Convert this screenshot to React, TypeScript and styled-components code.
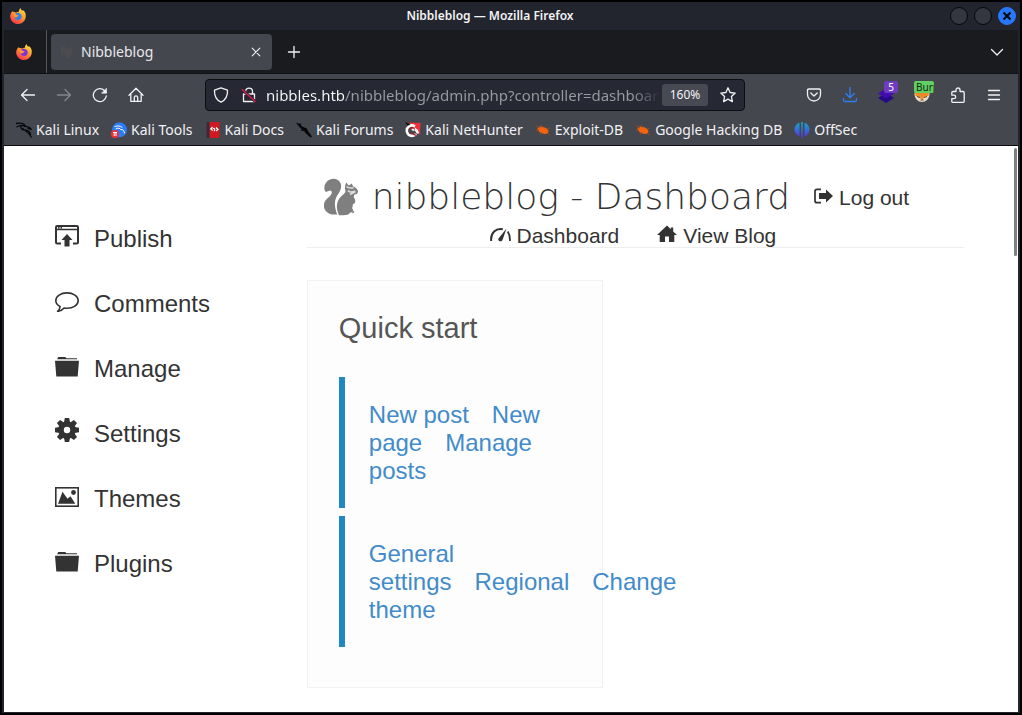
import React, { useId } from "react";
import styled, { createGlobalStyle } from "styled-components";

const uiFont = `"Noto Sans", "Open Sans", sans-serif`;
const pageFont = `"Liberation Sans", Arial, sans-serif`;

const GlobalStyle = createGlobalStyle`
  *, *::before, *::after { box-sizing: border-box; }
  body { margin: 0; background: #000; }
  button, input { font: inherit; }
  svg { display: block; flex: none; }
`;

/* ---------- Window frame ---------- */

const Window = styled.div`
  display: flex;
  flex-direction: column;
  min-height: 100vh;
  border: 2px solid #000;
  background: #23252e;
  font-family: ${uiFont};
  color: #f2f2f4;
`;

const TitleBar = styled.header`
  display: flex;
  align-items: center;
  height: 28px;
  padding: 0 4px 0 8px;
`;

const WindowTitle = styled.div`
  flex: 1;
  padding-left: 16px;
  text-align: center;
  font-size: 12px;
  font-weight: 600;
  line-height: 24px;
`;

const WindowButtons = styled.div`
  display: flex;
  gap: 6px;
  padding-left: 12px;
`;

const WindowButton = styled.button<{ $close?: boolean }>`
  display: flex;
  align-items: center;
  justify-content: center;
  width: 18px;
  height: 18px;
  padding: 0;
  border: 1px solid ${(p) => (p.$close ? "#2777ff" : "#07080b")};
  border-radius: 50%;
  background: ${(p) => (p.$close ? "#2777ff" : "#343741")};
  color: #07080b;
`;

const Browser = styled.div`
  display: flex;
  flex: 1;
  flex-direction: column;
  margin: 0 2px 1px;
`;

/* ---------- Tabs ---------- */

const TabStrip = styled.div`
  display: flex;
  align-items: center;
  height: 44px;
  border-bottom: 1px solid #101114;
  background: #1a1b1f;
`;

const ViewButton = styled.button`
  display: flex;
  align-items: center;
  justify-content: center;
  align-self: stretch;
  width: 43px;
  padding: 0 2px 0 0;
  border: 0;
  border-right: 1px solid #55565c;
  background: none;
`;

const Tab = styled.div`
  display: flex;
  align-items: center;
  width: 221px;
  height: 36px;
  margin-left: 4px;
  padding: 0 6px 0 8px;
  border-radius: 4px;
  background: #45474f;
  font-size: 14px;
`;

const TabLabel = styled.span`
  flex: 1;
  padding-left: 6px;
  color: #e8e8ea;
`;

const IconButton = styled.button<{ $width: number; $color?: string }>`
  position: relative;
  display: flex;
  align-items: center;
  justify-content: center;
  width: ${(p) => p.$width}px;
  height: 32px;
  padding: 0;
  border: 0;
  background: none;
  color: ${(p) => p.$color ?? "#f2f2f4"};
`;

const Spacer = styled.div`
  flex: 1;
`;

/* ---------- Navigation bar ---------- */

const NavBar = styled.nav`
  display: flex;
  align-items: center;
  height: 41px;
  padding: 0 6px;
  background: #45474f;
`;

const AddressBar = styled.div`
  display: flex;
  flex: 1;
  align-items: center;
  min-width: 0;
  height: 32px;
  margin: 0 51px;
  padding: 0 1px;
  border: 1px solid #0d0e12;
  border-radius: 4px;
  background: #262833;
`;

const AddressInput = styled.input`
  flex: 1;
  min-width: 0;
  height: 28px;
  margin: 0 2px 0 3px;
  padding: 0;
  border: 0;
  outline: 0;
  background: linear-gradient(
    to right,
    #fafafc 78px,
    #9a9ba2 78px,
    #9a9ba2 calc(100% - 28px),
    #262833
  );
  background-clip: text;
  -webkit-background-clip: text;
  -webkit-text-fill-color: transparent;
  color: #9a9ba2;
  font-size: 15px;
`;

const ZoomButton = styled.button`
  width: 46px;
  height: 22px;
  margin-right: 5px;
  padding: 0;
  border: 0;
  border-radius: 3px;
  background: #474953;
  color: #f2f2f4;
  font-size: 12px;
  line-height: 22px;
`;

const Badge = styled.span<{ $green?: boolean }>`
  position: absolute;
  top: 2px;
  right: 6px;
  width: ${(p) => (p.$green ? 20 : 14)}px;
  height: 12px;
  overflow: hidden;
  padding-left: ${(p) => (p.$green ? 2 : 0)}px;
  border-radius: 2px;
  background: ${(p) => (p.$green ? "#62cf62" : "#6f3cc0")};
  color: ${(p) => (p.$green ? "#102a10" : "#fff")};
  font-size: 10px;
  line-height: 12px;
  text-align: ${(p) => (p.$green ? "left" : "center")};
`;

/* ---------- Bookmarks ---------- */

const BookmarkBar = styled.nav`
  display: flex;
  align-items: center;
  gap: 12px;
  height: 31px;
  padding-left: 12px;
  border-bottom: 1px solid #0b0b0e;
  background: #45474f;
`;

const Bookmark = styled.a`
  display: flex;
  align-items: center;
  gap: 4px;
  color: #f2f2f4;
  font-size: 14px;
  line-height: 20px;
  text-decoration: none;
  white-space: nowrap;
`;

/* ---------- Page ---------- */

const Page = styled.div`
  position: relative;
  display: flex;
  flex: 1;
  padding: 0 54px 24px 51px;
  background: #fff;
  color: #333;
  font-family: ${pageFont};
`;

const ScrollThumb = styled.div`
  position: absolute;
  top: 2px;
  right: 1px;
  width: 3px;
  height: 108px;
  border-radius: 2px;
  background: #7f8082;
`;

const SideNav = styled.nav`
  flex: 1;
  padding-top: 60px;
`;

const SideLink = styled.a`
  display: flex;
  align-items: baseline;
  gap: 15px;
  color: #333;
  font-size: 24px;
  line-height: 65px;
  text-decoration: none;
`;

const Main = styled.main`
  width: 72.3%;
`;

const PageHeader = styled.header`
  padding-top: 25px;
  border-bottom: 1px solid #eee;
`;

const TitleRow = styled.div`
  display: flex;
  align-items: center;
  justify-content: center;
  padding-right: 40px;
`;

const PageTitle = styled.h1`
  margin: 0 24px 0 12px;
  font-family: "DejaVu Sans Light", "DejaVu Sans", sans-serif;
  font-size: 36px;
  font-weight: 200;
  line-height: 52px;
  white-space: nowrap;
`;

const TopNav = styled.nav`
  display: flex;
  justify-content: center;
  gap: 38px;
  padding: 1px 5px 0 0;
`;

const TopLink = styled.a`
  display: flex;
  align-items: baseline;
  gap: 6px;
  color: #333;
  font-size: 21px;
  line-height: 23px;
  text-decoration: none;
  white-space: nowrap;
`;

const Card = styled.section`
  width: 45%;
  margin-top: 32px;
  padding: 31px 31px 40px;
  border: 1px solid #f1f1f1;
  background: #fdfdfd;
`;

const CardTitle = styled.h2`
  margin: 0 0 33px;
  color: #555;
  font-size: 29px;
  font-weight: 400;
  line-height: 32px;
`;

const LinkGroup = styled.div`
  padding: 24px 0 23px 24px;
  border-left: 6px solid #2187c2;
  font-size: 24px;
  line-height: 28px;

  & + & {
    margin-top: 8px;
  }
`;

const QuickLink = styled.a`
  margin-right: 23px;
  color: #428bca;
  text-decoration: none;
`;

/* ---------- Icons ---------- */

type IconProps = { size?: number; children: React.ReactNode };

const Line = ({ size = 16, children }: IconProps) => (
  <svg width={size} height={size} viewBox="0 0 16 16" fill="none" stroke="currentColor" strokeWidth="1.3" strokeLinecap="round" strokeLinejoin="round" aria-hidden="true">
    {children}
  </svg>
);

const Art = ({ size = 16, children }: IconProps) => (
  <svg width={size} height={size} viewBox="0 0 16 16" aria-hidden="true">
    {children}
  </svg>
);

const Glyph = ({ size = 24, children }: IconProps) => (
  <svg width={size} height={size} viewBox="0 0 24 24" fill="currentColor" aria-hidden="true">
    {children}
  </svg>
);

const FirefoxLogo = ({ core, size = 16 }: { core: string; size?: number }) => {
  const id = useId();
  return (
    <Art size={size}>
      <defs>
        <linearGradient id={id} x1="0.8" y1="0" x2="0.25" y2="1">
          <stop offset="0" stopColor="#ffe44a" />
          <stop offset="0.45" stopColor="#ff9a2a" />
          <stop offset="1" stopColor="#ff3053" />
        </linearGradient>
      </defs>
      <path d="M2.2 3.2C2.7 3.7 3.4 4 4.2 4L6 4.4 9 3.6C8.9 2 9.7.8 10.7 0c0 1.3.7 2 1.6 2.8.3-.2.4-.5.5-.8C15 3.500 16 5.800 15.800 8.500 15.500 12.800 12.200 16 8 16S.4 12.700.2 8.700C.1 6.500 1.100 4.600 2.200 3.200z" fill={`url(#${id})`} />
      <path d="M5.200 5.500C7 4 10.800 4.700 11.600 7.500c.7 2.500-1.200 4.500-3.500 4.500S4.500 10.500 4.500 8.800c1.200.7 2.500.3 3-.8-1 0-1.900-.7-2.300-2.500z" fill={core} />
      <path d="M3.800 6.300C5 5.700 6.300 6.300 7 7c.9.1 1.500.3 1.600.6-.4 1-1.500 1-1.700 1.400-.9.700-2 .3-2.500 0z" fill="#ff9838" />
    </Art>
  );
};

const DragonArt = () => (
  <Art>
    <path d="M0 1.500c4-.8 7-.4 8.500 1.300M1 4.800C4 3 7 3 9 4.500M5 4c-.5 3 1.500 4 4.500 4.200 3.200.2 4.500 1.800 5 4.300M9 3.800l4.500 1.700 1.500 1.700-3-.8M7 6.500c2 3 5 2.500 8.200 8.500" fill="none" stroke="#07080a" strokeWidth="1.300" strokeLinecap="round" />
  </Art>
);

const ToolsArt = () => (
  <Art>
    <circle cx="8.500" cy="7.800" r="7.500" fill="#2b7cf6" />
    <path d="M4 4.500c3-1 5-.8 7 .8M5 6.800C7.500 5.500 9 6.300 9.500 7.500c2.500-.3 3.500 1 4 3.500" fill="none" stroke="#fff" strokeWidth="1" strokeLinecap="round" />
    <rect x="0" y="8" width="8" height="8" rx="3.500" fill="#e8323c" />
    <path d="M2 10.500h4M3.200 10.500v3.500M5 10.500v3.500" stroke="#fff" strokeWidth="1" />
  </Art>
);

const DocsArt = () => (
  <Art>
    <rect x="1.500" y="0" width="13" height="16" rx="1" fill="#d21820" />
    <rect x="1.500" y="0" width="3" height="16" fill="#29303f" />
    <path d="M7.500 5L5.800 7l2 1.500M11 5.500L13 7.500 11 9M7.800 6.500c2-.8 2.600 2.700 1 2.200" fill="none" stroke="#fff" strokeWidth="1.200" />
  </Art>
);

const ForumsArt = () => (
  <Art>
    <path d="M0 .5l3 1.200L4.500 1l.5 2.500 3 2 2.500.5 1.500 3 4 5.500-1.500 1-4.500-4-2-2.500-3.500-.5 1.300-1.300L3 4.500 1.800 3z" fill="#07080a" />
  </Art>
);

const NetHunterArt = () => (
  <Art>
    <path d="M4 .5L15.500 1 15 13z" fill="#f2303c" />
    <path d="M10 4.500C5.500 1.500.8 5.500 2 10s6.500 5 9 2M7.500 8.500c1-2.500 4-2 5.500 3" fill="none" stroke="#fff" strokeWidth="2.600" />
    <path d="M0 .5c3 0 4.500 1 5 2.500l-2.500.5z" fill="#111" />
    <path d="M4.500 7c1.500-1.500 4-1.500 5.500.5M5 10c1.500 2 4 2 6 3.500" fill="none" stroke="#b51c27" strokeWidth="1.200" />
  </Art>
);

const BugArt = () => (
  <Art>
    <ellipse cx="8" cy="8.200" rx="5.800" ry="3.300" transform="rotate(22 8 8.200)" fill="#f2640f" />
    <path d="M1 3.500l4 2.700M6 2.500l1 3M1 8.500l3-.5M5 13l1.500-2.500M12.500 6.500L15 6M12 11l3 2.500" stroke="#8c4b2b" strokeWidth="1" />
  </Art>
);

const OffSecArt = () => {
  const id = useId();
  return (
    <Art>
      <defs>
        <linearGradient id={id} x1="0" y1="0" x2="0" y2="1">
          <stop offset="0" stopColor="#13aeca" />
          <stop offset="1" stopColor="#5a2be0" />
        </linearGradient>
      </defs>
      <path d="M5.500.8v13.500C-1.200 12-1.200 3 5.500.8zM7.200 0h1.600v16H7.200zM10.500.8c6.700 2.200 6.700 11.200 0 13.500z" fill={`url(#${id})`} />
    </Art>
  );
};

const FolderGlyph = () => (
  <Glyph>
    <path d="M2.500 5.200L3.300 4h7l1 1.200H22v1.100H2.300zM0 7.800h24l-1.300 15.700H1.300z" />
  </Glyph>
);

const PublishGlyph = () => (
  <Glyph>
    <path d="M6 20.500H2.200Q1 20.500 1 19.300V4.200Q1 3 2.200 3h19.600Q23 3 23 4.200v15.100q0 1.200-1.200 1.200H18" fill="none" stroke="currentColor" strokeWidth="2" />
    <path d="M1 6.500h22M3 4.800h1.500M5.500 4.800H7" stroke="currentColor" strokeWidth="1.400" />
    <path d="M12 11l5.500 6H14.500v6.500h-5V17H6.500z" />
  </Glyph>
);

const CommentGlyph = () => (
  <Glyph>
    <path d="M12 4.900c6.200 0 11.200 3.200 11.200 7.700s-5 7.700-11.200 7.700c-1 0-2-.1-2.900-.3-1.700 2-4 3.200-6.500 3.300 1.600-1.200 2.500-2.800 2.400-4.800C2.500 17.200.8 15 .8 12.600.8 8.100 5.800 4.900 12 4.900z" fill="none" stroke="currentColor" strokeWidth="1.600" strokeLinejoin="round" />
  </Glyph>
);

const GearGlyph = () => (
  <Glyph>
    <circle cx="12" cy="12" r="6" fill="none" stroke="currentColor" strokeWidth="5.600" />
    {[0, 45, 90, 135, 180, 225, 270, 315].map((angle) => (
      <path key={angle} d="M9 4.500L9.800 0h4.400L15 4.500z" transform={`rotate(${angle} 12 12)`} />
    ))}
  </Glyph>
);

const PictureGlyph = () => (
  <Glyph>
    <rect x=".8" y="4.800" width="22.400" height="18.400" fill="none" stroke="currentColor" strokeWidth="1.600" />
    <path d="M3 20.800L7.500 8.800l5 7 3-2.500 4.800 7.500z" />
    <circle cx="18.500" cy="9.500" r="2.400" />
  </Glyph>
);

const SquirrelLogo = () => (
  <svg width="38" height="38" viewBox="0 0 38 38" role="img" aria-label="Nibbleblog">
    <path d="M10 36.500C4.500 35 1.500 31.500 2 27c.3-4 2.300-5.500 5.200-8.200C9.500 16.700 10.500 14.500 9.300 13c-1.200-1.300-3 0-5.300 1C1.300 12 2 6.500 5 3.500 8.500.2 14.500-.3 17.500 3.500c3.500 4.500.8 9.500-2 13.500-2.700 4-3.500 9.500-1.500 16 .5 2 1.500 3.500 1.500 3.500z" fill="#7f7f7f" />
    <path d="M17 37.200C13.500 30 14.500 23 19 18.500c2-2 4.200-2.800 4.500-5.500-1-3-.5-6 .7-8.500l2.600 3 3-2 1.200 2.800c2.500 1 5 3.400 5 5.200 0 1.800-1.500 3-3.800 3.200l-.5 2.300c2 3 2.500 6.500-.7 7l-.8 4.500c2 2.200.5 4-2.300 4.200-.8 1.800-3.500 2.500-6.500 2.500z" fill="#7f7f7f" />
    <path d="M24.500 8.500c1.500 1.500 4.500 1.700 7 1.300M26 12.500c2 2.500 4.500 1.700 7 .5M28 16.500l5.500-3" fill="none" stroke="#dedede" strokeWidth="1.600" />
    <circle cx="31" cy="34" r="1.300" fill="#999" />
  </svg>
);

/* ---------- Content ---------- */

const bookmarks = [
  { label: "Kali Linux", art: <DragonArt /> },
  { label: "Kali Tools", art: <ToolsArt /> },
  { label: "Kali Docs", art: <DocsArt /> },
  { label: "Kali Forums", art: <ForumsArt /> },
  { label: "Kali NetHunter", art: <NetHunterArt /> },
  { label: "Exploit-DB", art: <BugArt /> },
  { label: "Google Hacking DB", art: <BugArt /> },
  { label: "OffSec", art: <OffSecArt /> },
];

const sections = [
  { label: "Publish", icon: <PublishGlyph /> },
  { label: "Comments", icon: <CommentGlyph /> },
  { label: "Manage", icon: <FolderGlyph /> },
  { label: "Settings", icon: <GearGlyph /> },
  { label: "Themes", icon: <PictureGlyph /> },
  { label: "Plugins", icon: <FolderGlyph /> },
];

const quickLinks = [
  ["New post", "New page", "Manage posts"],
  ["General settings", "Regional", "Change theme"],
];

export default function App() {
  return (
    <Window>
      <GlobalStyle />
      <TitleBar>
        <FirefoxLogo core="#3a7de0" />
        <WindowTitle>Nibbleblog — Mozilla Firefox</WindowTitle>
        <WindowButtons>
          <WindowButton aria-label="Minimize" />
          <WindowButton aria-label="Maximize" />
          <WindowButton aria-label="Close" $close>
            <svg width="10" height="10" viewBox="0 0 10 10" stroke="currentColor" strokeWidth="2.200" aria-hidden="true">
              <path d="M1.500 1.500l7 7M8.500 1.500l-7 7" />
            </svg>
          </WindowButton>
        </WindowButtons>
      </TitleBar>

      <Browser>
        <TabStrip>
          <ViewButton aria-label="Firefox View">
            <FirefoxLogo core="#7a35d8" />
          </ViewButton>
          <Tab>
            <Art>
              <path d="M2 3l4-1 2 3 4-2 2 4-3 7H7L5 9 2 13z" fill="#4c4c50" />
            </Art>
            <TabLabel>Nibbleblog</TabLabel>
            <IconButton $width={20} aria-label="Close tab">
              <Line>
                <path d="M4.200 4.200l7.600 7.600M11.800 4.200l-7.600 7.600" strokeWidth="1.100" />
              </Line>
            </IconButton>
          </Tab>
          <IconButton $width={43} aria-label="New tab">
            <Line>
              <path d="M8 2.500v11M2.500 8h11" />
            </Line>
          </IconButton>
          <Spacer />
          <IconButton $width={42} aria-label="List all tabs">
            <Line>
              <path d="M2.500 5.500L8 11l5.500-5.500" />
            </Line>
          </IconButton>
        </TabStrip>

        <NavBar>
          <IconButton $width={36} aria-label="Back">
            <Line>
              <path d="M14.500 8h-13M7 2.500L1.500 8 7 13.500" />
            </Line>
          </IconButton>
          <IconButton $width={36} $color="#85868c" aria-label="Forward">
            <Line>
              <path d="M1.500 8h13M9 2.500L14.500 8 9 13.500" />
            </Line>
          </IconButton>
          <IconButton $width={36} aria-label="Reload">
            <Line>
              <path d="M14.300 9A6.500 6.500 0 1 1 12.600 3.700L14 5.200" />
              <path d="M14.500 1.500v4.700H9.800z" fill="currentColor" strokeWidth=".6" />
            </Line>
          </IconButton>
          <IconButton $width={36} aria-label="Home">
            <Line>
              <path d="M1 8.200L8 1.200l7 7M2.800 7v7.300h10.400V7M6.300 14.300V10.500c0-2.200 3.400-2.200 3.400 0v3.800" />
            </Line>
          </IconButton>

          <AddressBar>
            <IconButton $width={28} aria-label="Tracking protection">
              <Line>
                <path d="M8 .9l6.500 2.300c.3 5.200-1.700 9.600-6.500 12C3.200 12.800 1.200 8.400 1.500 3.200z" />
              </Line>
            </IconButton>
            <IconButton $width={28} aria-label="Connection is not secure">
              <Line>
                <path d="M4.500 7V4.500C4.500 0 11.500 0 11.500 4.500V7M2.500 7h11v7.500h-11z" />
                <path d="M1.200 2.500l13 12" stroke="#262833" strokeWidth="3" />
                <path d="M1.200 2.500l13 12" stroke="#e3174c" />
              </Line>
            </IconButton>
            <AddressInput
              aria-label="Address"
              readOnly
              value="nibbles.htb/nibbleblog/admin.php?controller=dashboard"
            />
            <ZoomButton>160%</ZoomButton>
            <IconButton $width={30} aria-label="Bookmark this page">
              <Line>
                <path d="M8 .8l2.100 4.700 5.100.6-3.800 3.500 1 5L8 12.100l-4.400 2.500 1-5L.8 6.100l5.100-.6z" />
              </Line>
            </IconButton>
          </AddressBar>

          <IconButton $width={36} aria-label="Save to Pocket">
            <Line>
              <path d="M2.700 2h10.600q1.200 0 1.200 1.200V7.500c0 3.600-2.900 6.500-6.500 6.500S1.500 11.100 1.500 7.500V3.200Q1.500 2 2.700 2zM4.800 6L8 9l3.200-3" />
            </Line>
          </IconButton>
          <IconButton $width={36} $color="#2f7df6" aria-label="Downloads">
            <Line>
              <path d="M8 .5v10M3.800 6.500L8 10.700l4.200-4.200M1.500 11.500v1.500q0 1.500 1.500 1.500h10q1.500 0 1.500-1.500v-1.500" />
            </Line>
          </IconButton>
          <IconButton $width={36} aria-label="Proxy switcher">
            <Art>
              <path d="M8 6l8 5-8 5-8-5z" fill="#240a86" />
              <path d="M8 1.500l8 5-8 5-8-5z" fill="#430cb0" />
            </Art>
            <Badge>5</Badge>
          </IconButton>
          <IconButton $width={36} aria-label="FoxyProxy">
            <Art>
              <circle cx="8" cy="7.500" r="7.500" fill="#e8dcc8" />
              <path d="M1 3l3.500 2h7L15 3l-.5 6-3.500.5L8 13 5 9.500 1.500 9z" fill="#ee8a23" />
              <path d="M3 9.500l3 1M13 9.500l-3 1M6.500 13h3" stroke="#5a4030" strokeWidth="1" />
            </Art>
            <Badge $green>Burp</Badge>
          </IconButton>
          <IconButton $width={36} aria-label="Extensions">
            <Line>
              <path d="M1.800 6V5.700Q1.800 4.500 3 4.500h3V3c0-2.700 4-2.700 4 0v1.500h3q1.200 0 1.200 1.200v8.800q0 .8-.8.8H2.600q-.8 0-.8-.8v-2.800H4c2.200 0 2.200-3.600 0-3.600H1.800z" />
            </Line>
          </IconButton>
          <IconButton $width={36} aria-label="Open menu">
            <Line>
              <path d="M2.500 3.500h11M2.500 8h11M2.500 12.500h11" />
            </Line>
          </IconButton>
        </NavBar>

        <BookmarkBar>
          {bookmarks.map((b) => (
            <Bookmark key={b.label} href="#">
              {b.art}
              {b.label}
            </Bookmark>
          ))}
        </BookmarkBar>

        <Page>
          <SideNav>
            {sections.map((s) => (
              <SideLink key={s.label} href="#">
                {s.icon}
                {s.label}
              </SideLink>
            ))}
          </SideNav>

          <Main>
            <PageHeader>
              <TitleRow>
                <SquirrelLogo />
                <PageTitle>nibbleblog - Dashboard</PageTitle>
                <TopLink href="#">
                  <svg width="19" height="17" viewBox="0 0 19 17" fill="currentColor" aria-hidden="true">
                    <path d="M7 1.300H3Q1 1.300 1 3.300v9.400q0 2 2 2h4" fill="none" stroke="currentColor" strokeWidth="1.700" />
                    <path d="M5 5h7V1.500l7 6.500-7 6.500V11H5z" />
                  </svg>
                  Log out
                </TopLink>
              </TitleRow>
              <TopNav>
                <TopLink href="#">
                  <svg width="21" height="16" viewBox="0 0 21 16" fill="currentColor" aria-hidden="true">
                    <path d="M1.200 14C.3 6 6 .8 12.800 2.200" fill="none" stroke="currentColor" strokeWidth="2" />
                    <path d="M17.700 4.500c1.800 2.500 2.500 5.500 2.200 9.500" fill="none" stroke="currentColor" strokeWidth="1.800" />
                    <path d="M16.500 1.500L12.500 13c-1 2.300-4.800 1.500-4.200-1.200z" />
                  </svg>
                  Dashboard
                </TopLink>
                <TopLink href="#">
                  <svg width="20" height="18" viewBox="0 0 20 18" fill="currentColor" aria-hidden="true">
                    <path d="M10 .5l3.800 3.700V2.500h2.400v4L20 10h-2.700v7H12v-5.500H8V17H2.700v-7H0z" />
                  </svg>
                  View Blog
                </TopLink>
              </TopNav>
            </PageHeader>

            <Card>
              <CardTitle>Quick start</CardTitle>
              {quickLinks.map((group) => (
                <LinkGroup key={group[0]}>
                  {group.map((label) => (
                    <QuickLink key={label} href="#">
                      {label}
                    </QuickLink>
                  ))}
                </LinkGroup>
              ))}
            </Card>
          </Main>
          <ScrollThumb />
        </Page>
      </Browser>
    </Window>
  );
}
